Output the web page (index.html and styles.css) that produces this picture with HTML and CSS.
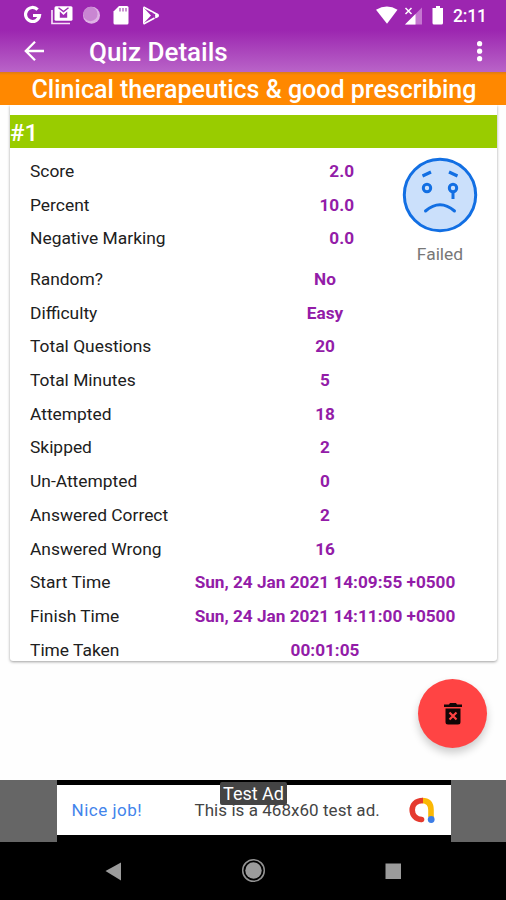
FILE: index.html
```html
<!DOCTYPE html>
<html lang="en">
<head>
<meta charset="utf-8">
<title>Quiz Details</title>
<link rel="stylesheet" href="styles.css">
</head>
<body>
<div class="screen">
  <header class="header">
    <div class="status">
      <svg class="status-left" width="140" height="24" viewBox="0 0 140 24" fill="none">
        <path d="M15.6 6.600A7 7 0 1 0 17.500 12.500H11" stroke="#fff" stroke-width="3.200"/>
        <path d="M30 7v13.500h18" stroke="#f5dff8" stroke-width="1.700"/>
        <rect x="32.500" y="3.200" width="18" height="14.600" rx="1.500" fill="#fff"/>
        <path d="M37.800 14.800V8.600l3.700 3.300 3.700-3.300v6.200z" fill="#9f2cb3"/>
        <path d="M36.500 4.800l5 3.800 5-3.800" stroke="#9f2cb3" stroke-width="1.400"/>
        <circle cx="69.500" cy="12.300" r="8.500" fill="#dfb2e5"/>
        <circle cx="68.400" cy="11" r="7.200" fill="#c986d2"/>
        <path d="M97 3h8q1.500 0 1.500 1.500V20q0 1.500-1.500 1.500H93Q91.500 21.500 91.500 20V8.500z" fill="#fff"/>
        <path d="M98 5v3.500M101 5v3.500M104 5v3.500" stroke="#a64ab3" stroke-width="1.200"/>
        <path d="M121 4v17l8-8.500z" fill="#fff"/>
        <path d="M121.500 4l13 7q2 1.500 0 3L121.500 21" stroke="#fff" stroke-width="1.700"/>
        <path d="M129.500 9l4 7" stroke="#a535b5" stroke-width="1"/>
        <circle cx="135" cy="12.500" r="2" fill="#fff"/>
      </svg>
      <div class="status-right">
        <svg width="72" height="24" viewBox="0 0 72 24" fill="none">
          <path d="M0 6.800Q11 0 21.500 6.800L11 20.800z" fill="#fff"/>
          <path d="M46 4.500v17H29z" fill="#c577d0"/>
          <path d="M39.500 11v10.500H29z" fill="#fff"/>
          <path d="M29.500 5l6 6M35.500 5l-6 6" stroke="#fff" stroke-width="1.500"/>
          <path d="M60 3h4v2h3v15q0 1.500-1.500 1.500H58q-1.500 0-1.500-1.500V5H60z" fill="#fff"/>
        </svg>
        <span class="clock">2:11</span>
      </div>
    </div>
    <div class="toolbar">
      <svg class="back" width="22" height="22" viewBox="0 0 22 22" fill="none" stroke="#fff" stroke-width="2.300"><path d="M20 10H1.800M11 .800L1.800 10l9.200 9.200"/></svg>
      <h1 class="title">Quiz Details</h1>
      <svg class="more" width="8" height="24" viewBox="0 0 8 24" fill="#fff"><circle cx="3.600" cy="3.700" r="2.600"/><circle cx="3.600" cy="11.200" r="2.600"/><circle cx="3.600" cy="18.700" r="2.600"/></svg>
    </div>
  </header>
  <div class="subject"><span>Clinical therapeutics &amp; good prescribing</span></div>
  <main class="content">
    <section class="card">
      <h2 class="number">#1</h2>
      <div class="summary">
        <dl class="scores">
          <div class="row"><dt>Score</dt><dd>2.0</dd></div>
          <div class="row"><dt>Percent</dt><dd>10.0</dd></div>
          <div class="row"><dt>Negative Marking</dt><dd>0.0</dd></div>
        </dl>
        <div class="result">
          <svg width="76" height="76" viewBox="0 0 76 76" fill="none" stroke="#126fe3" stroke-width="3" stroke-linecap="round">
            <circle cx="38" cy="38" r="35.700" fill="#cbe0fb"/>
            <path d="M20.500 19l8.500-4M47 15l8.500 4" stroke-linecap="butt" stroke-width="3.200"/>
            <circle cx="25" cy="31" r="3.700"/><circle cx="51" cy="31" r="3.700"/>
            <path d="M51 35v7" stroke-linecap="butt"/>
            <path d="M23.500 54Q38 41.500 52.500 54"/>
          </svg>
          <span class="verdict">Failed</span>
        </div>
      </div>
      <dl class="details">
        <div class="row"><dt>Random?</dt><dd>No</dd></div>
        <div class="row"><dt>Difficulty</dt><dd>Easy</dd></div>
        <div class="row"><dt>Total Questions</dt><dd>20</dd></div>
        <div class="row"><dt>Total Minutes</dt><dd>5</dd></div>
        <div class="row"><dt>Attempted</dt><dd>18</dd></div>
        <div class="row"><dt>Skipped</dt><dd>2</dd></div>
        <div class="row"><dt>Un-Attempted</dt><dd>0</dd></div>
        <div class="row"><dt>Answered Correct</dt><dd>2</dd></div>
        <div class="row"><dt>Answered Wrong</dt><dd>16</dd></div>
        <div class="row"><dt>Start Time</dt><dd>Sun, 24 Jan 2021 14:09:55 +0500</dd></div>
        <div class="row"><dt>Finish Time</dt><dd>Sun, 24 Jan 2021 14:11:00 +0500</dd></div>
        <div class="row"><dt>Time Taken</dt><dd>00:01:05</dd></div>
      </dl>
    </section>
    <button class="fab" aria-label="Delete">
      <svg width="20" height="24" viewBox="0 0 20 24"><path d="M1 2.500h5L7 1h6l1 1.500h5V5H1zM2.500 6.500h15V20q0 2.500-2.500 2.500H5Q2.500 22.500 2.500 20z" fill="#120606"/><path d="M6.500 10.500l7 7M13.500 10.500l-7 7" stroke="#ff4444" stroke-width="2.200"/></svg>
    </button>
  </main>
  <aside class="ad">
    <div class="banner">
      <span class="cheer">Nice job!</span>
      <span class="copy">This is a 468x60 test ad.</span>
      <svg class="admob" width="28" height="28" viewBox="0 0 28 28" fill="none" stroke-width="5.600">
        <path d="M14 4.500Q23 4.500 23 14V21" stroke="#fbb805"/>
        <path d="M15 4.500C7.500 4.500 4.200 9 4.200 14S8 23.500 13.500 23.500" stroke="#e53a2e"/>
        <circle cx="13.500" cy="23.500" r="2.800" fill="#e53a2e" stroke="none"/>
        <circle cx="23.200" cy="23.500" r="3.400" fill="#3c7de6" stroke="none"/>
      </svg>
    </div>
    <span class="tag">Test Ad</span>
  </aside>
  <nav class="nav">
    <svg width="506" height="58" viewBox="0 0 506 58">
      <path d="M105.500 29L121 20.500v18z" fill="#9b9b9b"/>
      <circle cx="253.500" cy="28.500" r="10.800" fill="none" stroke="#929292" stroke-width="1.500"/><circle cx="253.500" cy="28.500" r="8.200" fill="#9b9b9b"/>
      <rect x="385.500" y="21.500" width="15.500" height="15.500" fill="#9b9b9b"/>
    </svg>
  </nav>
</div>
</body>
</html>
```
FILE: styles.css
```css
* { box-sizing: border-box; }
body { margin: 0; background: #fff; font-family: Roboto, sans-serif; }
h1, h2, dl, dd { margin: 0; }
svg { display: block; flex: none; }
.screen { width: 506px; height: 900px; display: flex; flex-direction: column; overflow: hidden; background: #fefefe; }
.header { height: 72px; flex: none; background: linear-gradient(#9c26b0 0, #9c26b0 30px, #b964c8 72px); color: #fff; }
.status { height: 32px; padding: 3px 17px 0 22px; display: flex; justify-content: space-between; }
.status-right { display: flex; gap: 5px; }
.clock { font-size: 17.500px; line-height: 26px; font-weight: 500; width: 36px; letter-spacing: -0.2px; white-space: nowrap; }
.toolbar { height: 40px; padding: 0 22px 1px 24px; display: flex; align-items: center; }
.title { margin-left: 43px; flex: 1; font-size: 26px; line-height: 38px; font-weight: 500; padding-top: 1px; }
.subject { height: 33px; flex: none; background: linear-gradient(#dc7a17 0, #ff8800 3px); color: #fff; text-align: center; padding-left: 2px; font-size: 25px; line-height: 35px; font-weight: 500; white-space: nowrap; }
.content { height: 675px; flex: none; display: flex; flex-direction: column; padding: 0 9px 0 10px; }
.card { height: 556px; padding-top: 10px; background: #fff; box-shadow: 0 1px 3px rgba(0, 0, 0, .38); clip-path: inset(0 -5px -5px -5px); border-radius: 0 0 3px 3px; overflow: hidden; flex: none; }
.number { height: 33px; background: #99cc00; color: #fff; font-size: 24px; line-height: 36px; font-weight: 500; }
.summary { height: 114px; display: flex; justify-content: space-between; padding: 6px 19px 0 20px; }
.scores { width: 324px; }
.row { height: 33.730px; display: flex; align-items: center; font-size: 17.400px; line-height: 22px; white-space: nowrap; }
dt { color: #202020; flex: 1; }
dd { color: #931cA8; font-size: 17.200px; font-weight: 700; }
.result { width: 76px; display: flex; flex-direction: column; align-items: center; padding-top: 3px; }
.verdict { color: #777; font-size: 17.400px; line-height: 22px; margin-top: 10px; }
.details { padding: 0 34px 0 20px; }
.details dd { width: 276px; text-align: center; }
.fab { width: 69px; height: 69px; margin: 18px 10px 0 0; align-self: flex-end; border: 0; border-radius: 50%; padding: 0; background: #ff4444; display: flex; align-items: center; justify-content: center; box-shadow: 0 5px 8px rgba(0, 0, 0, .2); }
.ad { height: 62px; flex: none; position: relative; background: #666; display: flex; justify-content: center; }
.banner { width: 394px; height: 62px; border: solid #000; border-width: 5px 0 7px; margin-left: 1px; background: #fff; display: flex; align-items: center; padding: 0 15px; font-size: 17px; white-space: nowrap; }
.cheer { width: 123px; color: #4284eb; letter-spacing: 0.5px; }
.copy { flex: 1; color: #444; letter-spacing: 0.05px; }
.tag { position: absolute; left: 220px; top: 2px; width: 67px; height: 23px; border-radius: 2px; background: #444; color: #fff; font-size: 18px; line-height: 24px; text-align: center; white-space: nowrap; }
.nav { height: 58px; flex: none; background: #000; }
```
